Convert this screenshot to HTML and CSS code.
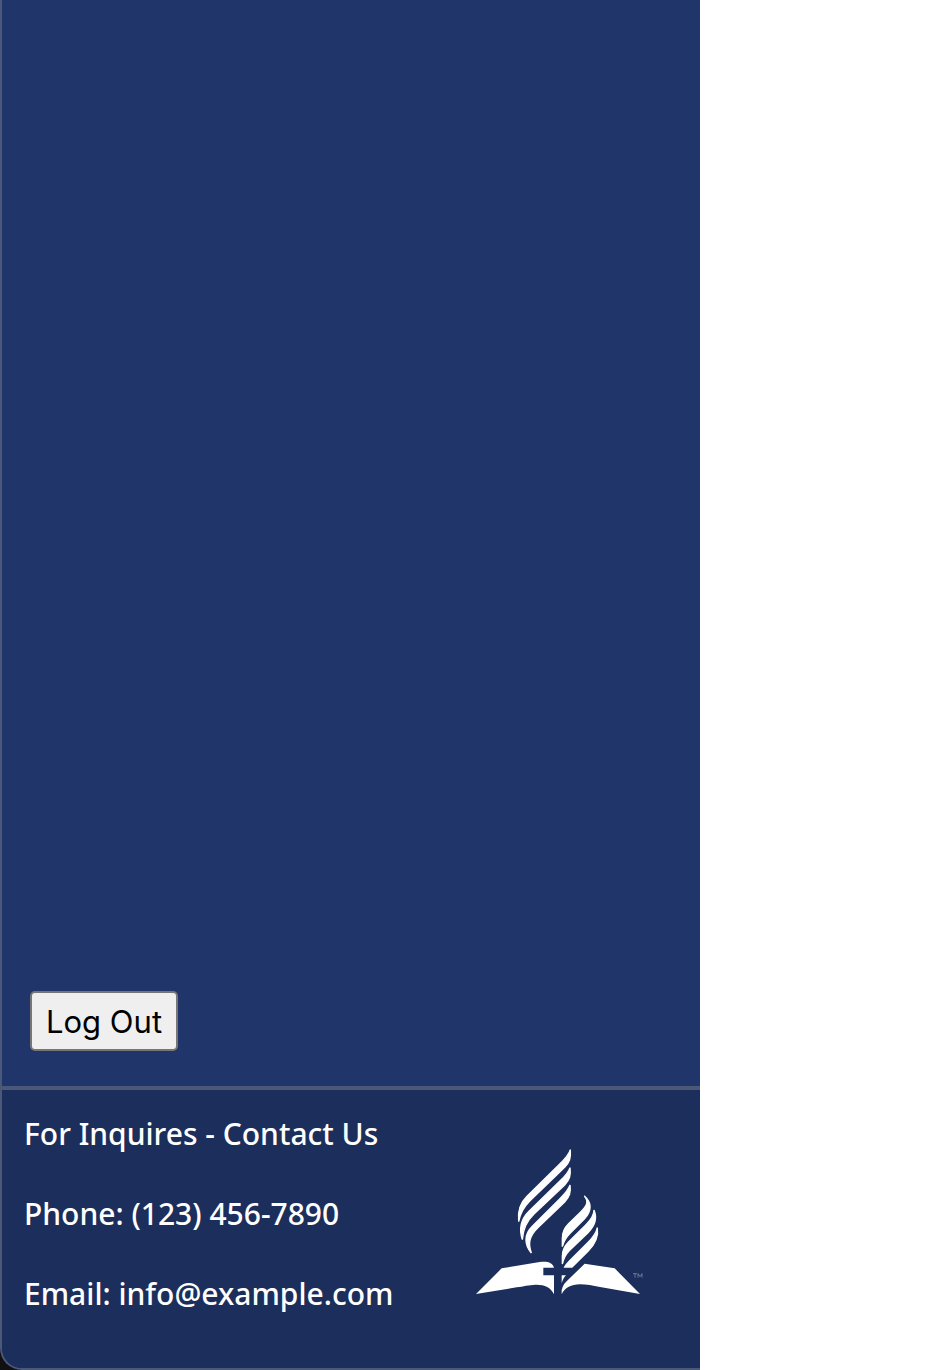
FILE: index.html
```html
<!DOCTYPE html>
<html lang="en">
<head>
<meta charset="utf-8">
<meta name="viewport" content="width=device-width, initial-scale=1">
<title>Contact</title>
<link rel="stylesheet" href="styles.css">
</head>
<body>
<div class="backdrop">
  <aside class="sidebar">
    <div class="sidebar-body">
      <button class="logout" type="button">Log Out</button>
    </div>
    <footer class="contact">
      <div class="contact-lines">
        <p>For Inquires - Contact Us</p>
        <p>Phone: (123) 456-7890</p>
        <p>Email: info@example.com</p>
      </div>
      <svg class="logo" viewBox="48 54 501 441" role="img" aria-label="Church logo">
        <g fill="#fff" stroke="#fff" stroke-width="4">
          <path d="M331 59C333 85 329 96 314 112L210 212C190 232 180 252 176 275C173 246 177 222 201 199L297 104C314 88 327 75 331 59Z"/>
          <path d="M330 113C333 137 329 149 314 165L222 252C198 275 189 298 187 329C178 301 179 271 207 244L299 154C316 138 326 127 330 113Z"/>
          <path d="M330 165C333 188 329 200 314 216L235 292C207 319 204 340 214 369C194 345 190 315 217 289L299 207C316 190 326 179 330 165Z"/>
          <path d="M373 198C395 217 397 242 373 267L331 309C315 325 311 335 307 350V325C307 307 311 296 325 282L362 246C381 227 387 214 373 198Z"/>
          <path d="M402 240C412 264 406 286 384 308L329 361C315 375 311 385 307 402V379C307 362 311 351 325 337L378 284C394 268 402 256 402 240Z"/>
          <path d="M412 293C416 318 406 342 384 364L336 411H314C317 405 321 400 329 392L386 335C402 319 409 308 412 293Z"/>
        </g>
        <g fill="#fff">
          <path d="M48 492L125 415L239 396C263 393 278 398 282 413H250V436H282V493C272 471 252 463 226 464C207 465 190 469 170 472Z"/>
          <path d="M305 436H318C311 443 308 450 305 460Z"/>
          <path d="M305 493V481C308 466 315 458 326 448L374 401L464 415L540 492L420 471C398 467 380 463 360 463C333 464 316 471 305 493Z"/>
        </g>
        <path d="M519 431H531M525 431V443M534 443V431L540 440L546 431V443" fill="none" stroke="#8c98b5" stroke-width="2"/>
      </svg>
    </footer>
  </aside>
</div>
</body>
</html>
```
FILE: styles.css
```css
* { box-sizing: border-box; }

body {
  margin: 0;
  background: #fff;
  font-family: "Trebuchet MS", "Noto Sans", sans-serif;
}

.backdrop {
  max-width: 700px;
  background: #111;
}

.sidebar {
  display: flex;
  flex-direction: column;
  min-height: 100vh;
  overflow: hidden;
  border: 2px solid #4b5878;
  border-width: 0 0 2px 2px;
  border-bottom-left-radius: 22px;
  background: #203569;
}

.sidebar-body {
  display: flex;
  flex: 1;
  align-items: flex-end;
  padding: 35px 28px;
}

.logout {
  height: 60px;
  padding: 0 14px;
  border: 2px solid #767676;
  border-radius: 5px;
  background: #efefef;
  color: #000;
  font: 31px Inter, sans-serif;
}

.contact {
  display: flex;
  align-items: center;
  justify-content: space-between;
  padding: 24px 57px 40px 22px;
  border-top: 4px solid #4b5878;
  background: #1c2e5b;
  color: #fff;
}

.contact-lines {
  display: grid;
  gap: 40px;
  padding-bottom: 14px;
  font-size: 30px;
  font-weight: 500;
  line-height: 40px;
}

.contact-lines p { margin: 0; }

.logo {
  flex: none;
  width: 167px;
  height: 147px;
}
```
